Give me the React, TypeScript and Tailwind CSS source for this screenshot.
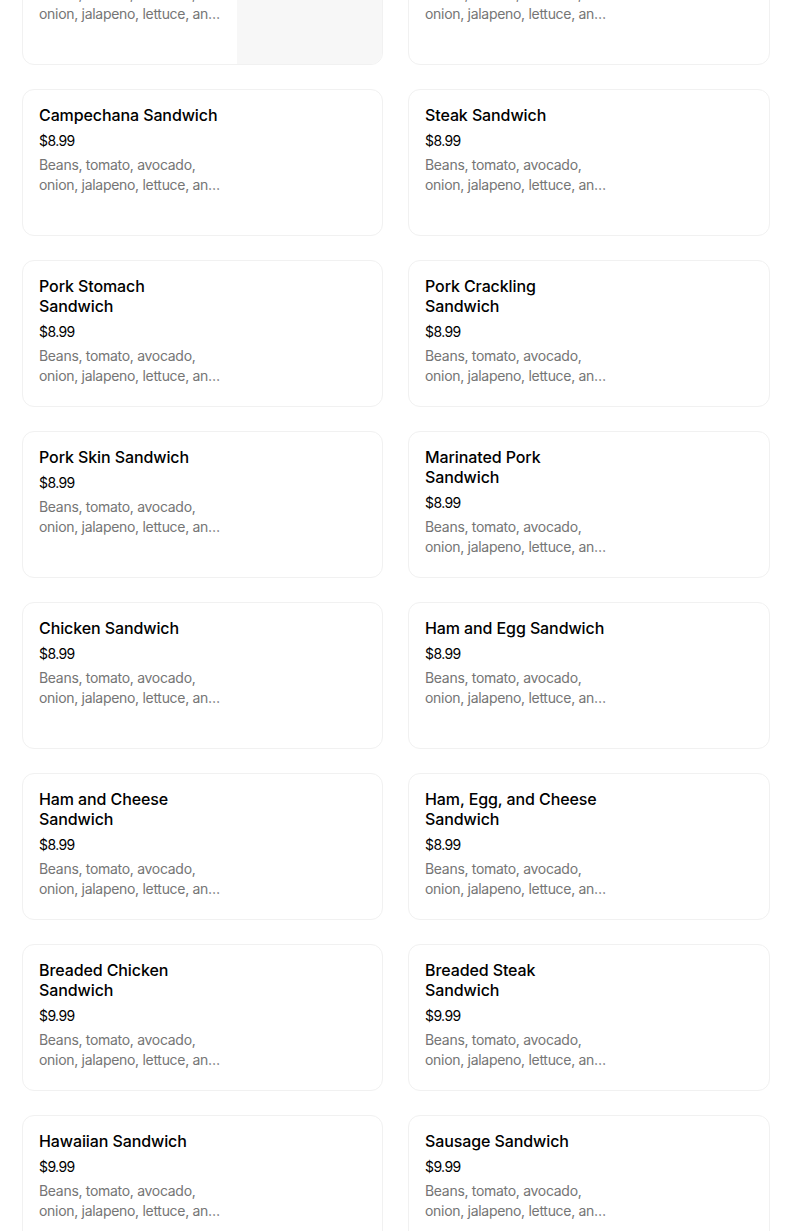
const desc = 'Beans, tomato, avocado, onion, jalapeno, lettuce, and mayonnaise.';

type Item = { name: string; price: string; image?: boolean };

const items: Item[] = [
  { name: 'Milanesa Sandwich', price: '$8.99', image: true },
  { name: 'Chorizo Sandwich', price: '$8.99' },
  { name: 'Campechana Sandwich', price: '$8.99' },
  { name: 'Steak Sandwich', price: '$8.99' },
  { name: 'Pork Stomach Sandwich', price: '$8.99' },
  { name: 'Pork Crackling Sandwich', price: '$8.99' },
  { name: 'Pork Skin Sandwich', price: '$8.99' },
  { name: 'Marinated Pork Sandwich', price: '$8.99' },
  { name: 'Chicken Sandwich', price: '$8.99' },
  { name: 'Ham and Egg Sandwich', price: '$8.99' },
  { name: 'Ham and Cheese Sandwich', price: '$8.99' },
  { name: 'Ham, Egg, and Cheese Sandwich', price: '$8.99' },
  { name: 'Breaded Chicken Sandwich', price: '$9.99' },
  { name: 'Breaded Steak Sandwich', price: '$9.99' },
  { name: 'Hawaiian Sandwich', price: '$9.99' },
  { name: 'Sausage Sandwich', price: '$9.99' },
];

function MenuCard({ item }: { item: Item }) {
  return (
    <div className="flex h-[147px] overflow-hidden rounded-xl border border-[#f1f1f1] bg-white">
      <div className="flex w-[214px] shrink-0 flex-col px-4 pt-[15px]">
        <div className="text-[16px] leading-5 font-medium tracking-[-0.1px] text-black">{item.name}</div>
        <div className="mt-[6px] text-[14px] leading-5 tracking-[-0.6px] text-black">{item.price}</div>
        <div className="mt-1 line-clamp-2 text-[14px] leading-5 tracking-[-0.3px] text-[#757575]">{desc}</div>
      </div>
      {item.image && <div className="ml-auto h-full w-[146px] bg-[#f7f7f7]" />}
    </div>
  );
}

export default function App() {
  return (
    <div className="h-[1231px] overflow-hidden bg-white" style={{ fontFamily: 'Inter, "Noto Sans", sans-serif' }}>
      <div className="mt-[-82px] grid grid-cols-[361px_362px] gap-x-[25px] gap-y-[24px] pl-[22px]">
        {items.map((item) => (
          <MenuCard key={item.name} item={item} />
        ))}
      </div>
    </div>
  );
}
